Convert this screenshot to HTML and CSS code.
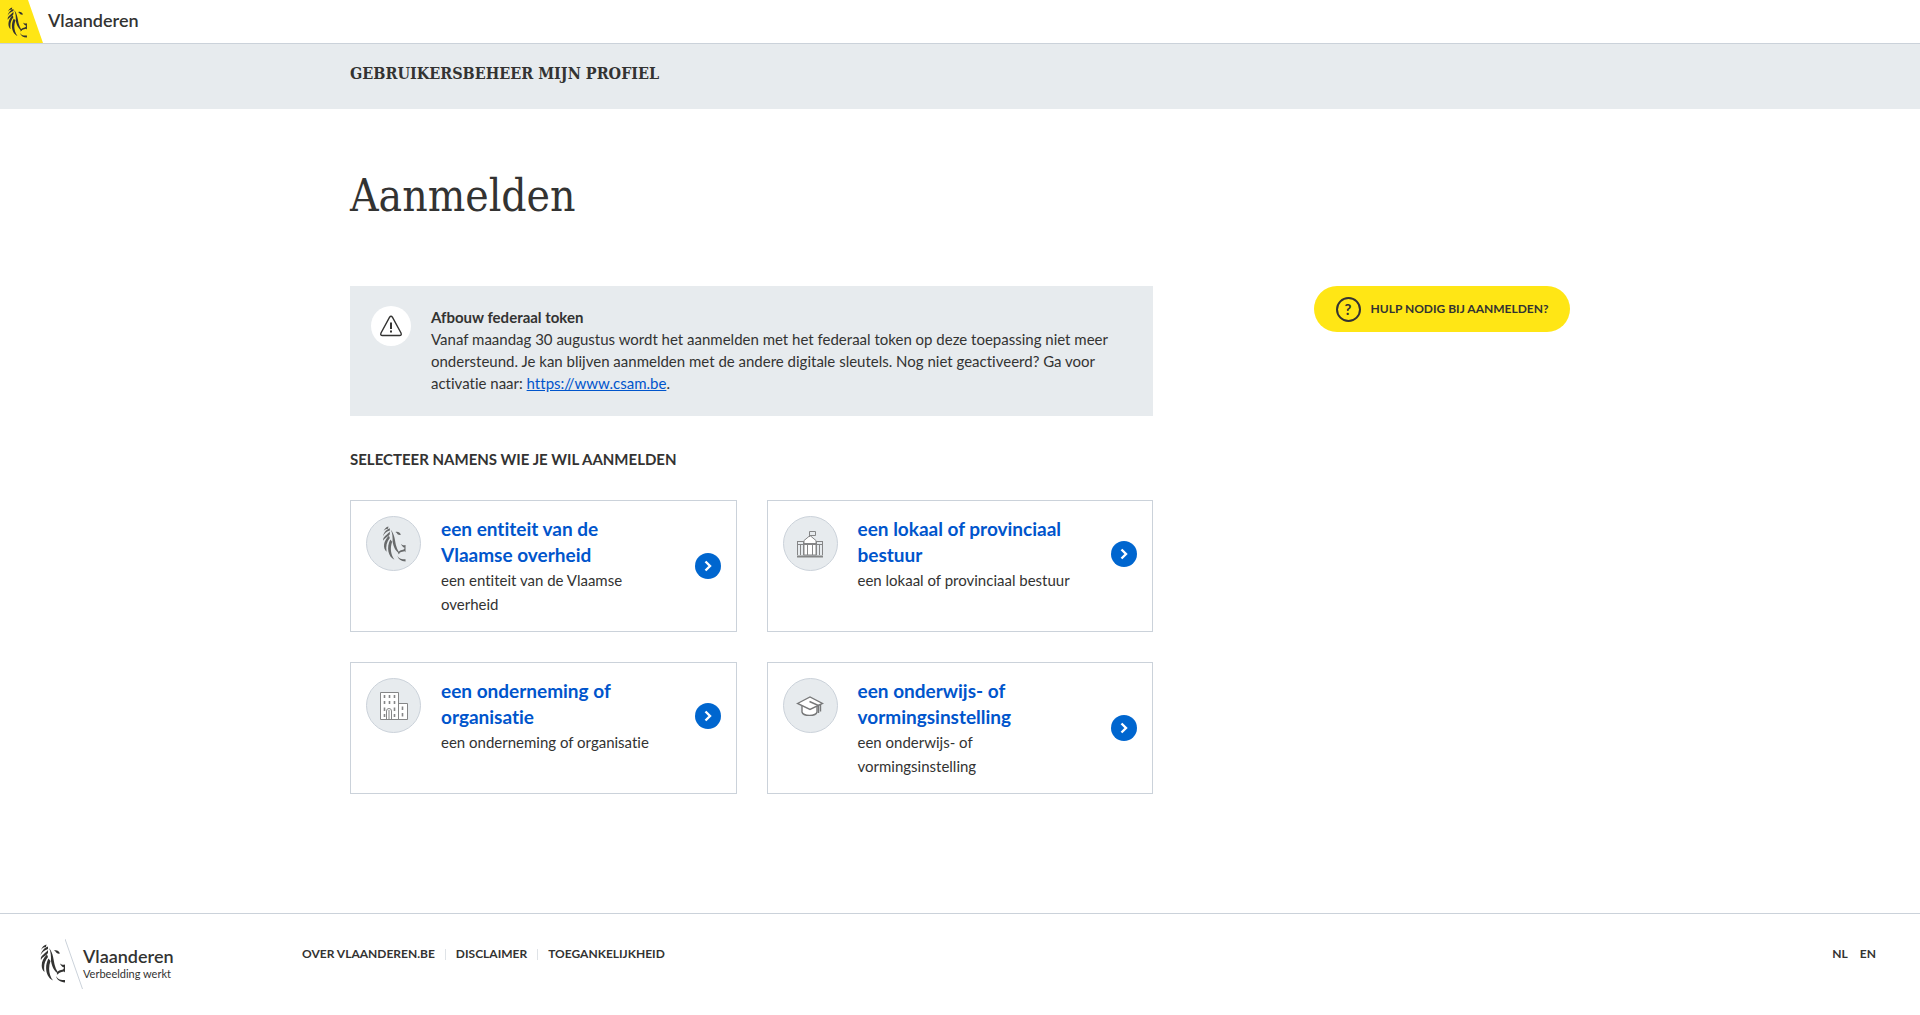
FILE: index.html
```html
<!DOCTYPE html>
<html lang="nl">
<head>
<meta charset="utf-8">
<meta name="viewport" content="width=device-width, initial-scale=1">
<title>Aanmelden - Gebruikersbeheer Mijn Profiel</title>
<link rel="stylesheet" href="styles.css">
</head>
<body>
<svg class="sprite" aria-hidden="true">
  <symbol id="lion" viewBox="0 0 25 39">
    <path d="M1 6C2 3 4 1 6.500 .5L6 3C4 3 2 4 1 6ZM.5 11C2 6 5 3.500 8 2.500V5C5 6 2 8 .5 11ZM1 16C-.5 12 6 9 8 6V9C6 12 2 13 1 16ZM4.500 28C0 24 1 16 7 10.500L8 13C4.500 17 3.500 22 4.500 28ZM13 36.500C6 33 4 23 8.500 14.500L10.500 17C8 24 9 31 13 36.500ZM9 4C13.500 9 13.500 17 15 22C16 26 18 28 19 30C14.500 28 12 23 11 17C11 12 11 8 9 4Z"/>
    <path d="M14 6.500C16 5.500 19 6.500 20 9.500C18 10 16 9 15.500 7.500"/>
    <path d="M20 19.500C22 21 23 21 25 20.500V28.500C24 26.500 23 28 21.500 28C20 28.500 18 29 17 31C16.500 28 18.500 26.500 21 26C23 26 24 24.500 24 23.500C22 23 21 21.500 20 19.500ZM16 32C18 36 21 36 25 36V38.500C20 38 17 36 16 32Z"/>
  </symbol>
  <symbol id="chevron" viewBox="0 0 26 26">
    <circle cx="13" cy="13" r="13" fill="#0066cf"/>
    <path d="M10.500 8.500l4.500 4.500-4.500 4.500" fill="none" stroke="#fff" stroke-width="2.400"/>
  </symbol>
</svg>

<header class="topbar">
  <a class="topbar__brand" href="#">
    <span class="topbar__flag"><svg class="lion lion--small" aria-hidden="true"><use href="#lion"/></svg></span>
    <span class="topbar__name">Vlaanderen</span>
  </a>
</header>
<div class="appbar"><div class="container appbar__title">GEBRUIKERSBEHEER MIJN PROFIEL</div></div>

<main class="container">
  <h1 class="title">Aanmelden</h1>
  <div class="layout">
    <div class="content">
      <section class="alert">
        <span class="alert__icon">
          <svg width="24" height="22" viewBox="0 0 24 22" fill="none" stroke="#333332" aria-hidden="true"><path d="M10.600 2.200Q12 .2 13.400 2.200L22 18Q23 20.500 20.500 20.500H3.500Q1 20.500 2 18Z" stroke-width="1.400"/><path d="M12 7.500V14M12 15.500V17.500" stroke-width="2"/></svg>
        </span>
        <div class="alert__body">
          <h2 class="alert__title">Afbouw federaal token</h2>
          <p class="alert__text">Vanaf maandag 30 augustus wordt het aanmelden met het federaal token op deze toepassing niet meer ondersteund. Je kan blijven aanmelden met de andere digitale sleutels. Nog niet geactiveerd? Ga voor activatie naar: <a href="#">https://www.csam.be</a>.</p>
        </div>
      </section>

      <h2 class="subtitle">SELECTEER NAMENS WIE JE WIL AANMELDEN</h2>

      <div class="cards">
        <a class="card" href="#">
          <span class="card__icon"><svg class="lion lion--card" aria-hidden="true"><use href="#lion"/></svg></span>
          <span class="card__main">
            <span class="card__text"><span class="card__title">een entiteit van de Vlaamse overheid</span><span class="card__desc">een entiteit van de Vlaamse overheid</span></span>
            <svg class="card__arrow" aria-hidden="true"><use href="#chevron"/></svg>
          </span>
        </a>
        <a class="card" href="#">
          <span class="card__icon">
            <svg width="28" height="28" viewBox="0 0 28 28" fill="none" stroke="#858687" aria-hidden="true"><path d="M7.500 11L14 5.500 20.500 11V25H7.500Z" fill="#fff"/><path d="M1 11.500H8M20 11.500H27M1 14.500H27M1.500 11V25M4.500 15V25M23.500 15V25M26.500 11V25M8 11V25M20 11V25M8 13.500H20M11.500 15V25M16.500 15V25M13.500 7V1.500H19.500V5.500H14"/><path d="M1 26.500H27" stroke-width="2"/></svg>
          </span>
          <span class="card__main">
            <span class="card__text"><span class="card__title">een lokaal of provinciaal bestuur</span><span class="card__desc">een lokaal of provinciaal bestuur</span></span>
            <svg class="card__arrow" aria-hidden="true"><use href="#chevron"/></svg>
          </span>
        </a>
        <a class="card" href="#">
          <span class="card__icon">
            <svg width="28" height="28" viewBox="0 0 28 28" fill="none" stroke="#858687" aria-hidden="true"><path d="M.5.500H18.500V27.500H.5ZM18.500 11.500H27.500V27.500H18.500Z" fill="#fff"/><path d="M6.500 27.500V19Q6.500 16.500 9 16.500T11.500 19V27.500M9 18V27.500"/><path d="M4.500 3V6M9.500 3V6M14.500 3V6M4.500 9V12M9.500 9V12M14.500 9V12M4.500 15.500V19M14.500 15.500V19M4.500 22V25M14.500 22V25M22.500 14.500V18M22.500 21V24.500" stroke-width="1.600"/></svg>
          </span>
          <span class="card__main">
            <span class="card__text"><span class="card__title">een onderneming of organisatie</span><span class="card__desc">een onderneming of organisatie</span></span>
            <svg class="card__arrow" aria-hidden="true"><use href="#chevron"/></svg>
          </span>
        </a>
        <a class="card" href="#">
          <span class="card__icon">
            <svg width="28" height="28" viewBox="0 0 28 28" fill="none" stroke="#777879" stroke-width="1.400" aria-hidden="true"><path d="M6 11V20C7 24.500 20 24.500 21 20V11" fill="#fff"/><path d="M1.500 11.500L14 5 26.500 11.500 14 17.500Z" fill="#fff"/><path d="M13.500 9.500L22.500 13.500V21M24.500 12.500V19.500"/></svg>
          </span>
          <span class="card__main">
            <span class="card__text"><span class="card__title">een onderwijs- of vormingsinstelling</span><span class="card__desc">een onderwijs- of vormingsinstelling</span></span>
            <svg class="card__arrow" aria-hidden="true"><use href="#chevron"/></svg>
          </span>
        </a>
      </div>
    </div>
    <button class="help" type="button"><span class="help__icon">?</span>HULP NODIG BIJ AANMELDEN?</button>
  </div>
</main>

<footer class="footer">
  <a class="footer__brand" href="#">
    <svg class="lion lion--footer" aria-hidden="true"><use href="#lion"/></svg>
    <svg class="footer__slash" viewBox="0 0 18 50" aria-hidden="true"><path d="M0 0L17.500 50" stroke="#cbd2da"/></svg>
    <span class="footer__words"><span class="footer__name">Vlaanderen</span><span class="footer__slogan">Verbeelding werkt</span></span>
  </a>
  <nav class="footer__links" aria-label="Voettekst"><a href="#">OVER VLAANDEREN.BE</a><a href="#">DISCLAIMER</a><a href="#">TOEGANKELIJKHEID</a></nav>
  <nav class="footer__langs" aria-label="Taal"><a href="#">NL</a><a href="#">EN</a></nav>
</footer>
</body>
</html>
```
FILE: styles.css
```css
* { box-sizing: border-box; }
body {
  margin: 0;
  background: #fff;
  color: #333332;
  font: 400 15px/22px Lato, "Liberation Sans", sans-serif;
  font-variant-ligatures: none;
}
h1, h2, p { margin: 0; }
a { color: inherit; text-decoration: none; }
.sprite { position: absolute; width: 0; height: 0; }
.container { width: calc(100% - 60px); max-width: 1220px; margin: 0 auto; }

.lion { display: block; flex: none; fill: #333332; }
.lion--small { width: 20px; height: 31px; }
.lion--card { width: 26px; height: 36px; fill: #686a6b; }
.lion--footer { width: 25px; height: 39px; margin-top: 5px; }

.topbar { display: flex; border-bottom: 1px solid #cbd2da; }
.topbar__brand { display: flex; height: 43px; gap: 5px; }
.topbar__flag {
  width: 43px;
  padding: 7px 0 0 7px;
  background: #ffe615;
  clip-path: polygon(0 0, 28px 0, 43px 100%, 0 100%);
}
.topbar__name { font-size: 18px; font-weight: 600; line-height: 41px; }

.appbar { height: 65px; background: #e7ebee; }
.appbar__title {
  padding-top: 18px;
  font: 700 16px/24px "DejaVu Serif Condensed", "DejaVu Serif", serif;
}

.title {
  padding: 59px 0 63px;
  font: 400 44px/55px "DejaVu Serif Condensed", "DejaVu Serif", serif;
}
.layout { display: flex; justify-content: space-between; align-items: flex-start; gap: 30px; }
.content { flex: 0 1 803px; }

.alert { display: flex; gap: 20px; padding: 20px 21px 22px; background: #e7ebee; }
.alert__icon {
  display: flex;
  align-items: center;
  justify-content: center;
  flex: none;
  width: 40px;
  height: 40px;
  border-radius: 50%;
  background: #fff;
}
.alert__title { font-size: 15px; font-weight: 700; line-height: 22px; }
.alert__text a { color: #0055cc; text-decoration: underline; }

.subtitle { margin: 32px 0 30px; font-size: 15px; font-weight: 700; line-height: 22px; }

.cards { display: grid; grid-template-columns: repeat(2, minmax(0, 1fr)); gap: 30px; }
.card {
  display: flex;
  align-items: flex-start;
  gap: 20px;
  padding: 15px;
  border: 1px solid #cbd2da;
}
.card__icon {
  display: flex;
  align-items: center;
  justify-content: center;
  flex: none;
  width: 55px;
  height: 55px;
  border: 1px solid #cbd2da;
  border-radius: 50%;
  background: #e7ebee;
}
.card__main { display: flex; flex: 1; align-items: center; gap: 25px; min-width: 0; }
.card__text { flex: 1; }
.card__title { display: block; color: #0055cc; font-size: 19px; font-weight: 700; line-height: 26px; }
.card__desc { display: block; line-height: 24px; }
.card__arrow { flex: none; width: 26px; height: 26px; }

.help {
  display: flex;
  align-items: center;
  justify-content: center;
  gap: 10px;
  flex: none;
  width: 256px;
  height: 46px;
  padding: 0;
  border: 0;
  border-radius: 23px;
  background: #ffe615;
  color: #333332;
  font: 700 12px/20px Lato, "Liberation Sans", sans-serif;
  cursor: pointer;
}
.help__icon {
  width: 25px;
  height: 25px;
  border: 2px solid #333332;
  border-radius: 50%;
  font-size: 15px;
  line-height: 21px;
  text-align: center;
}

.footer {
  display: flex;
  align-items: flex-start;
  margin-top: 119px;
  padding: 25px 44px 26px 40px;
  border-top: 1px solid #cbd2da;
  font-size: 12px;
  font-weight: 700;
  line-height: 20px;
}
.footer__brand { display: flex; width: 262px; }
.footer__slash { width: 18px; height: 50px; }
.footer__words { display: flex; flex-direction: column; padding-top: 7px; }
.footer__name { font-size: 18px; font-weight: 600; line-height: 20px; }
.footer__slogan { font-size: 11px; font-weight: 400; line-height: 16px; }
.footer__links { display: flex; padding-top: 5px; }
.footer__links a { display: flex; align-items: center; }
.footer__links a + a::before { content: ""; width: 1px; height: 11px; margin: 0 10px; background: #dfe3e7; }
.footer__langs { display: flex; gap: 12px; margin-left: auto; padding-top: 5px; }
```
